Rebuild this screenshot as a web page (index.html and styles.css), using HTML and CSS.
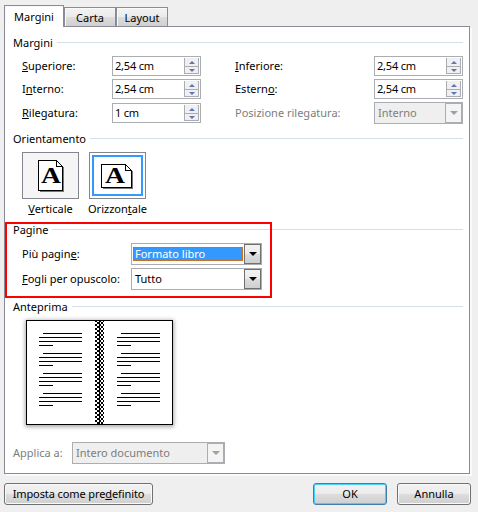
FILE: index.html
```html
<!DOCTYPE html>
<html lang="it">
<head>
    <meta charset="UTF-8">
    <title>Imposta pagina</title>
    <link rel="stylesheet" href="styles.css">
</head>
<body>

<div class="tabs">
    <div class="tab active">Margini</div>
    <div class="tab">Carta</div>
    <div class="tab">Layout</div>
</div>

<div class="panel">
    <h2>Margini</h2>
    <div class="fields">
        <label><u>S</u>uperiore:</label>
        <div class="spinner"><span>2,54 cm</span><div class="arrows"><i class="up"></i><i class="down"></i></div></div>
        <label class="second"><u>I</u>nferiore:</label>
        <div class="spinner"><span>2,54 cm</span><div class="arrows"><i class="up"></i><i class="down"></i></div></div>

        <label>I<u>n</u>terno:</label>
        <div class="spinner"><span>2,54 cm</span><div class="arrows"><i class="up"></i><i class="down"></i></div></div>
        <label class="second">Estern<u>o</u>:</label>
        <div class="spinner"><span>2,54 cm</span><div class="arrows"><i class="up"></i><i class="down"></i></div></div>

        <label><u>R</u>ilegatura:</label>
        <div class="spinner"><span>1 cm</span><div class="arrows"><i class="up"></i><i class="down"></i></div></div>
        <label class="second disabled">Posizione rilegatura:</label>
        <div class="combo disabled"><span>Interno</span><b></b></div>
    </div>

    <h2 class="orientation-title">Orientamento</h2>
    <div class="orientation">
        <div class="option">
            <div class="tile">
                <svg width="25" height="31" viewBox="0 0 25 31" shape-rendering="crispEdges">
                    <path d="M2 2h18l6 6v24H2z" fill="#777"/>
                    <path d="M.5.5h18l6 6v24H.5z" fill="#fff" stroke="#000"/>
                    <path d="M18.5.5v6h6" fill="none" stroke="#000"/>
                    <text x="3" y="23" textLength="20" lengthAdjust="spacingAndGlyphs">A</text>
                </svg>
            </div>
            <span><u>V</u>erticale</span>
        </div>
        <div class="option">
            <div class="tile selected">
                <svg width="33" height="23" viewBox="0 0 33 23" shape-rendering="crispEdges">
                    <path d="M2 2h24l6 6v17H2z" fill="#777"/>
                    <path d="M.5.5h24l6 6v17H.5z" fill="#fff" stroke="#000"/>
                    <path d="M24.5.5v6h6" fill="none" stroke="#000"/>
                    <text x="4" y="19" textLength="20" lengthAdjust="spacingAndGlyphs">A</text>
                </svg>
            </div>
            <span>Orizzon<u>t</u>ale</span>
        </div>
    </div>

    <div class="pages">
        <h2>Pagine</h2>
        <div class="row">
            <label>Più pagin<u>e</u>:</label>
            <div class="combo focused"><span>Formato libro</span><b></b></div>
        </div>
        <div class="row">
            <label><u>F</u>ogli per opuscolo:</label>
            <div class="combo"><span>Tutto</span><b></b></div>
        </div>
    </div>

    <h2 class="preview-title">Anteprima</h2>
    <svg class="preview" width="147" height="105" viewBox="0 0 147 105" shape-rendering="crispEdges">
        <defs>
            <pattern id="checker" width="4" height="4" patternUnits="userSpaceOnUse">
                <path d="M1 0h2v2H1zM3 2h1v2H3zM0 2h1v2H0z"/>
            </pattern>
            <g id="paragraph">
                <path d="M4 .5h39M0 4.5h43M0 8.5h43M0 12.5h14" stroke="#000"/>
            </g>
            <g id="page">
                <use href="#paragraph"/>
                <use href="#paragraph" y="20"/>
                <use href="#paragraph" y="40"/>
                <use href="#paragraph" y="60"/>
            </g>
        </defs>
        <rect x=".5" y=".5" width="146" height="104" fill="#fff" stroke="#000"/>
        <use href="#page" x="13" y="13"/>
        <use href="#page" x="91" y="13"/>
        <rect x="69" y="1" width="9" height="103" fill="url(#checker)"/>
        <rect x="73" y="1" width="1" height="103"/>
    </svg>

    <div class="apply disabled">
        <label>Applica a:</label>
        <div class="combo disabled"><span>Intero documento</span><b></b></div>
    </div>
</div>

<div class="buttons">
    <button class="default">Imposta come pre<u>d</u>efinito</button>
    <button class="ok">OK</button>
    <button>Annulla</button>
</div>

</body>
</html>
```

FILE: styles.css
```css
body {
    margin: 0;
    width: 478px;
    height: 512px;
    overflow: hidden;
    background-color: #efefef;
    font-family: "Noto Sans", sans-serif;
    font-size: 11px;
    line-height: 16px;
    color: #000;
    padding: 5px 0 0 4px;
}
*, *::before, *::after {
    box-sizing: border-box;
}
u {
    text-underline-offset: 1px;
    text-decoration-skip-ink: none;
}
.tabs {
    display: flex;
    align-items: flex-end;
    height: 22px;
    position: relative;
}
.tab {
    width: 52px;
    height: 20px;
    border: 1px solid #8b8b97;
    background: linear-gradient(#f3f3f3, #ebebeb 50%, #dddddd 50%, #d0d0d0);
    box-shadow: inset 1px 1px #fafafa;
    text-align: center;
    line-height: 19px;
}
.tab.active {
    width: 60px;
    height: 22px;
    border-bottom: none;
    background: #fff;
    line-height: 22px;
}
.panel {
    width: 466px;
    height: 448px;
    margin-top: -1px;
    padding: 8px 6px 0 8px;
    border: 1px solid #8b8b97;
    background-color: #fff;
    box-shadow: 2px 2px #fafafa;
}
h2 {
    display: flex;
    align-items: center;
    height: 16px;
    margin: 0 0 5px;
    font-size: 11px;
    font-weight: normal;
}
h2::after {
    content: "";
    flex: 1;
    height: 1px;
    margin: -1px 0 0 4px;
    background-color: #d5dfe8;
}
.fields {
    display: grid;
    grid-template-columns: 90px 89px 173px 89px;
    grid-template-rows: 20px 20px 22px;
    row-gap: 3px;
    align-items: center;
    padding-left: 9px;
}
.second {
    padding-left: 34px;
}
.disabled {
    color: #7d7d7d;
}
.spinner {
    display: flex;
    justify-content: space-between;
    height: 20px;
    padding: 1px 1px 1px 2px;
    border: 1px solid #abadb3;
    letter-spacing: -0.2px;
    line-height: 16px;
}
.arrows {
    width: 15px;
    height: 16px;
    border: 1px solid #abadb3;
    border-top: none;
    background-color: #f0f0f0;
}
.arrows i {
    display: flex;
    justify-content: center;
    align-items: center;
    height: 8px;
}
.arrows .down {
    height: 7px;
    border-top: 1px solid #abadb3;
}
.arrows i::before {
    content: "";
    width: 6px;
    height: 3px;
    border: 3px solid transparent;
    border-top: none;
    border-bottom: 3px solid #5d74b8;
}
.arrows .down::before {
    transform: rotate(180deg);
}
.combo {
    display: flex;
    height: 22px;
    border: 1px solid #abadb3;
    background-color: #fff;
    line-height: 20px;
}
.combo span {
    flex: 1;
    padding-left: 3px;
}
.combo b {
    display: flex;
    justify-content: center;
    align-items: center;
    width: 17px;
    border: 1px solid #707070;
    background: linear-gradient(#f2f2f2, #ebebeb 50%, #dddddd 50%, #cfcfcf);
}
.combo b::before {
    content: "";
    border: 4px solid transparent;
    border-top-color: #000;
    border-bottom: none;
}
.combo.disabled {
    background-color: #efefef;
}
.combo.disabled b {
    border-color: #abadb3;
    background: #f4f4f4;
}
.combo.disabled b::before {
    border-top-color: #a0a0a0;
}
.combo.focused span {
    margin: 3px 1px 3px 1px;
    padding-left: 2px;
    background-color: #3399ff;
    outline: 1px dotted #c96b1b;
    outline-offset: -1px;
    color: #fff;
    line-height: 14px;
}
.orientation-title {
    margin-top: 7px;
}
.orientation {
    display: flex;
    gap: 10px;
    height: 70px;
    padding-left: 9px;
}
.option {
    display: flex;
    flex-direction: column;
    align-items: center;
    width: 57px;
    gap: 2px;
    white-space: nowrap;
}
.tile {
    display: flex;
    justify-content: center;
    align-items: center;
    width: 57px;
    height: 47px;
    border: 1px solid #85858f;
    background-color: #f5f5f5;
}
.tile.selected {
    background-color: #fff;
    box-shadow: inset 0 0 0 2px #fff, inset 0 0 0 4px #3399ff;
}
.tile svg {
    overflow: visible;
}
.tile text {
    font: bold 24px "Liberation Serif", serif;
}
.pages {
    position: relative;
}
/* red highlight drawn over the group */
.pages::after {
    content: "";
    position: absolute;
    left: -8px;
    top: 0;
    width: 267px;
    height: 76px;
    border: 2px solid #ff0000;
}
.row {
    display: grid;
    grid-template-columns: 109px 131px;
    align-items: center;
    margin-bottom: 3px;
    padding-left: 9px;
}
.preview-title {
    margin-top: 9px;
}
.preview {
    display: block;
    margin-left: 13px;
    box-shadow: 0 1px 4px 1px #aaa;
}
.apply {
    display: grid;
    grid-template-columns: 59px 153px;
    align-items: center;
    margin-top: 17px;
}
.buttons {
    display: flex;
    gap: 10px;
    width: 467px;
    margin-top: 9px;
}
button {
    width: 74px;
    height: 22px;
    padding: 0;
    border: 1px solid #707070;
    border-radius: 3px;
    background: linear-gradient(#f2f2f2, #ebebeb 50%, #dddddd 50%, #cfcfcf);
    box-shadow: inset 0 0 0 1px #fafafa;
    font: inherit;
    color: #000;
}
.default {
    width: 149px;
    margin-right: auto;
    letter-spacing: -0.1px;
}
.ok {
    border-color: #3c7fb1;
    box-shadow: inset 0 0 0 1px #48d0f8;
}
```
